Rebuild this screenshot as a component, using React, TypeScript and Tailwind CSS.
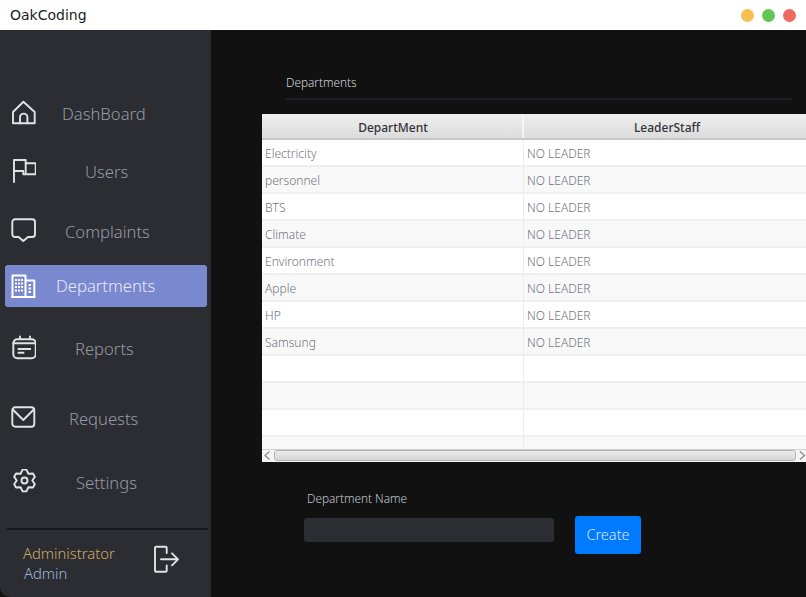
import type { ReactNode } from "react";

function Icon({ children, className }: { children: ReactNode; className?: string }) {
  return (
    <svg
      width="26"
      height="26"
      viewBox="0 0 26 26"
      fill="none"
      stroke="#e2e2e2"
      strokeWidth="1.9"
      strokeLinejoin="round"
      strokeLinecap="round"
      className={className}
    >
      {children}
    </svg>
  );
}

const windowCols = [5, 8, 11];
const windowRows = [6, 9.5, 13, 16.5];

const navItems = [
  {
    label: "DashBoard",
    row: "mt-[63px]",
    iconPos: "mt-[-2px]",
    labelPos: "ml-[26px]",
    icon: (
      <>
        <path d="M3 23.300V12L13.400 1.800 24.700 12v11.300z" />
        <path d="M10 23.300v-6a3.600 3.600 0 0 1 7.400 0v6" />
      </>
    ),
  },
  {
    label: "Users",
    row: "mt-[16px]",
    iconPos: "mt-[-4px]",
    labelPos: "ml-[49px]",
    icon: (
      <>
        <path d="M4 25V3h11.700v13" />
        <path d="M4 14h9.300v3.300h12.400V6.300H15.700" />
      </>
    ),
  },
  {
    label: "Complaints",
    row: "mt-[18px]",
    iconPos: "mt-[-6px]",
    labelPos: "ml-[29px]",
    icon: (
      <path d="M5 3.300h17.300a2.700 2.700 0 0 1 2.700 2.700v12.300a2.700 2.700 0 0 1-2.700 2.700H18l-4.700 4-4.700-4H5a2.700 2.700 0 0 1-2.700-2.700V6A2.700 2.700 0 0 1 5 3.300z" />
    ),
  },
  {
    label: "Departments",
    row: "mt-[12px]",
    iconPos: "",
    labelPos: "ml-[20px]",
    active: true,
    icon: (
      <g stroke="#ffffff" strokeWidth="2">
        <path d="M2.500 24V2.500h13V24z" />
        <path d="M15.500 7.500h8.800V24h-8.800" />
        <path d="M2 24h22.500" />
        {windowCols.flatMap((x) =>
          windowRows.map((y) => (
            <rect key={`${x}-${y}`} x={x} y={y} width="2" height="2" fill="#ffffff" stroke="none" />
          )),
        )}
        {[11, 14.500, 18].map((y) => (
          <rect key={y} x="18.500" y={y} width="2.500" height="2" fill="#ffffff" stroke="none" />
        ))}
      </g>
    ),
  },
  {
    label: "Reports",
    row: "mt-[21px]",
    iconPos: "mt-[-4px]",
    labelPos: "ml-[39px]",
    icon: (
      <>
        <rect x="3.300" y="5.300" width="22.400" height="19" rx="4" />
        <path d="M10 2.500v2.800M20 2.500v2.800M3.300 9.300h22.400" />
        <path d="M7.700 15H21M7.700 18.700h6.600" strokeLinecap="butt" />
      </>
    ),
  },
  {
    label: "Requests",
    row: "mt-[28px]",
    iconPos: "mt-[-6px]",
    labelPos: "ml-[33px]",
    icon: (
      <>
        <rect x="2.300" y="4.300" width="22" height="19.400" rx="3" />
        <path d="m3.300 7 10 10 10-10" />
      </>
    ),
  },
  {
    label: "Settings",
    row: "mt-[22px]",
    iconPos: "mt-[-2px]",
    labelPos: "ml-[40px]",
    icon: (
      <>
        <path d="M12.590 .670h3.820L18.400 4.750 22.930 4.430 24.840 7.740 22.300 11.500 24.840 15.260 22.930 18.570 18.400 18.250 16.410 22.330H12.590L10.600 18.250 6.070 18.570 4.160 15.260 6.700 11.500 4.160 7.740 6.070 4.430 10.600 4.750z" />
        <circle cx="14.500" cy="11.500" r="3" />
      </>
    ),
  },
];

const departments = [
  "Electricity",
  "personnel",
  "BTS",
  "Climate",
  "Environment",
  "Apple",
  "HP",
  "Samsung",
  "",
  "",
  "",
  "",
];

function Sidebar() {
  return (
    <aside className="flex w-[211px] shrink-0 flex-col rounded-bl-[10px] bg-[#2b2d33]">
      <nav className="flex flex-col">
        {navItems.map((item) => (
          <div
            key={item.label}
            className={`${item.row} mx-[5px] flex h-[42px] w-[202px] items-center rounded-[3px] pl-[5px] ${
              item.active ? "bg-[#7a88d0] text-[#e6eaf8]" : "text-[#959aa3]"
            }`}
          >
            <Icon className={`${item.iconPos} shrink-0`}>{item.icon}</Icon>
            <span className={`${item.labelPos} text-[16.600px] font-light`}>{item.label}</span>
          </div>
        ))}
      </nav>
      <div className="mx-[7px] mt-[24px] h-[2px] w-[201px] bg-[#17181c]" />
      <div className="flex items-start pl-[23px] pt-[13px]">
        <div className="w-[130px] text-[14.800px] font-light leading-[20px]">
          <div className="text-[#d2ab62]">Administrator</div>
          <div className="pl-px text-[#a0b4d8]">Admin</div>
        </div>
        <svg
          width="28"
          height="28"
          viewBox="0 0 28 28"
          fill="none"
          stroke="#e2e2e2"
          strokeWidth="1.900"
          strokeLinecap="round"
          strokeLinejoin="round"
          className="mt-[2px]"
        >
          <path d="M13.700 8V2.700a1 1 0 0 0-1-1H3a1 1 0 0 0-1 1v23a1 1 0 0 0 1 1h9.700a1 1 0 0 0 1-1V20.500" />
          <path d="M8 14.300h17M19 8.300l6 6-6 6" />
        </svg>
      </div>
    </aside>
  );
}

function DepartmentsTable() {
  return (
    <div className="relative h-[348px] overflow-hidden bg-white">
      <div className="flex h-[26px] border-b-2 border-[#c8c8c8] bg-gradient-to-b from-[#efefef] to-[#dcdcdc] text-[12px] font-medium leading-[27px] text-[#333339]">
        <div className="w-[262px] border-r-2 border-[#f4f4f4] pl-[2px] text-center">DepartMent</div>
        <div className="flex-1 pl-[4px] text-center">LeaderStaff</div>
      </div>
      {departments.map((name, i) => (
        <div
          key={i}
          className={`flex h-[27px] border-b-2 border-[#efefef] text-[12px] font-light leading-[27px] text-[#73737c] ${
            i % 2 === 1 ? "bg-[#f8f8f8]" : "bg-white"
          }`}
        >
          <div className="w-[262px] border-r-[1.500px] border-[#ececec] pl-[3px]">{name}</div>
          <div className="flex-1 pl-[3px]">{name ? "NO LEADER" : ""}</div>
        </div>
      ))}
      <div className="absolute inset-x-0 bottom-0 flex h-[13px] items-center justify-between border-t border-[#cfcfcf] bg-[#f4f4f4] pb-px">
        <svg width="12" height="11" viewBox="0 0 12 11" fill="none" stroke="#8a8a8a" strokeWidth="1.300">
          <path d="M7.500 1.500 3 5.500l4.500 4" />
        </svg>
        <div className="h-[11px] flex-1 rounded-[3px] border border-[#b4b4b4] bg-gradient-to-b from-[#ececec] to-[#d6d6d6]" />
        <svg width="10" height="11" viewBox="0 0 10 11" fill="none" stroke="#8a8a8a" strokeWidth="1.300">
          <path d="M4 1.500 8.500 5.500l-4.500 4" />
        </svg>
      </div>
    </div>
  );
}

export default function App() {
  return (
    <div className="flex h-[597px] w-[806px] flex-col overflow-hidden bg-white font-['Noto_Sans',sans-serif]">
      <header className="flex h-[30px] shrink-0 items-center justify-between pl-[10px] pr-[10px]">
        <span className="font-['DejaVu_Sans',sans-serif] text-[14px] text-[#1c1c1c]">OakCoding</span>
        <div className="flex gap-[8px]">
          <span className="size-[13px] rounded-full bg-[#f6bf50]" />
          <span className="size-[13px] rounded-full bg-[#62c654]" />
          <span className="size-[13px] rounded-full bg-[#ef6a5e]" />
        </div>
      </header>
      <div className="flex flex-1 bg-[#111112]">
        <Sidebar />
        <main className="flex-1 pl-[51px]">
          <div className="ml-[24px] mr-[14px] mt-[43px] h-[27px] border-b-2 border-[#1d1d23] text-[11.800px] font-light leading-[18px] text-[#d4d7dc]">
            Departments
          </div>
          <div className="mt-[14px]">
            <DepartmentsTable />
          </div>
          <div className="ml-[42px] mt-[28px] flex">
            <div className="w-[271px]">
              <div className="pl-[3px] text-[11.800px] font-light leading-[16px] text-[#c4cad0]">Department Name</div>
              <div className="mt-[12px] h-[24px] w-[250px] rounded-[3px] bg-[#2b2d33]" />
            </div>
            <button className="mt-[26px] h-[38px] w-[66px] rounded-[3px] bg-[#007bff] text-[14.500px] font-light text-[#d8e8ff]">
              Create
            </button>
          </div>
        </main>
      </div>
    </div>
  );
}
